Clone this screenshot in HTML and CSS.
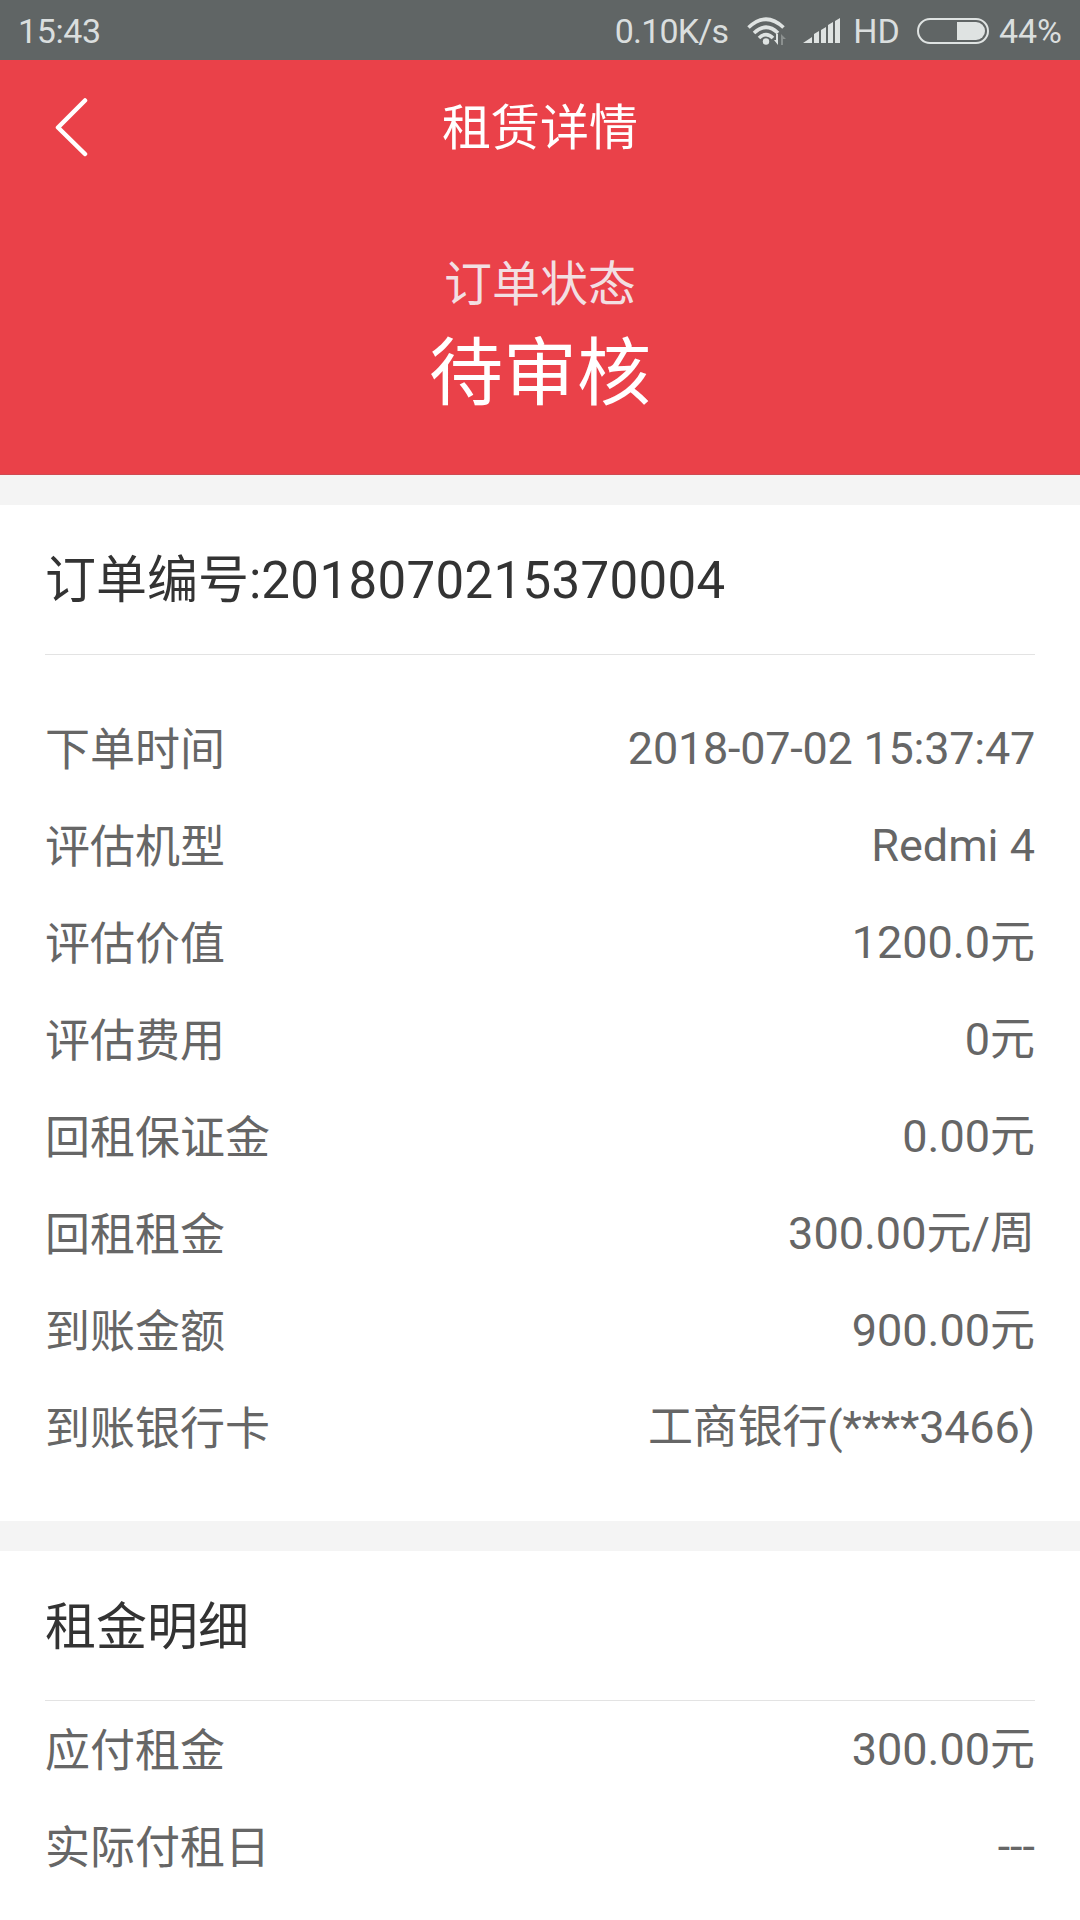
FILE: index.html
```html
<!DOCTYPE html>
<html lang="zh-CN">
<head>
    <meta charset="UTF-8">
    <meta name="viewport" content="width=device-width, initial-scale=1.0">
    <title>租赁详情</title>
    <link rel="stylesheet" href="styles.css">
</head>
<body>
    <div class="status-bar">
        <span class="time">15:43</span>
        <span class="speed">0.10K/s</span>
        <svg class="wifi" width="40" height="28" viewBox="0 0 40 28" fill="none" stroke="#dfe3e2" stroke-width="3.6">
            <path d="M1.5 10.5Q19 -6 36.5 10.5M7 16Q19 4.5 31 16M12 21Q19 14 26 21"/>
            <circle cx="19" cy="24.5" r="3.2" fill="#dfe3e2" stroke="none"/>
            <path d="M27 23h2v-6h2v11z" fill="#dfe3e2" stroke="none"/>
            <path d="M34 17l5 5h-3v6h-2z" fill="#8b908f" stroke="none"/>
        </svg>
        <svg class="signal" width="38" height="26" viewBox="0 0 38 26" fill="#dfe3e2">
            <path d="M0 25L9 19V25zM11 16L16 13V25H11zM18 12L23 9V25H18zM25 7L30 4V25H25zM32 3L37 0V25H32z"/>
        </svg>
        <span class="hd">HD</span>
        <span class="battery"><span class="level"></span></span>
        <span class="percent">44%</span>
    </div>

    <div class="header">
        <div class="nav">
            <svg class="back" width="34" height="60" viewBox="0 0 34 60" fill="none" stroke="#fff" stroke-width="4.5" stroke-linecap="round" stroke-linejoin="round">
                <path d="M31 3.500L4 30.500L31 57"/>
            </svg>
            <div class="title">租赁详情</div>
        </div>
        <div class="state-label">订单状态</div>
        <div class="state">待审核</div>
    </div>

    <div class="card order">
        <div class="card-title">订单编号:<span class="number">2018070215370004</span></div>
        <div class="list">
            <div class="row"><span class="label">下单时间</span><span class="date">2018-07-02 15:37:47</span></div>
            <div class="row"><span class="label">评估机型</span><span>Redmi 4</span></div>
            <div class="row"><span class="label">评估价值</span><span>1200.0元</span></div>
            <div class="row"><span class="label">评估费用</span><span>0元</span></div>
            <div class="row"><span class="label">回租保证金</span><span>0.00元</span></div>
            <div class="row"><span class="label">回租租金</span><span>300.00元/周</span></div>
            <div class="row"><span class="label">到账金额</span><span>900.00元</span></div>
            <div class="row"><span class="label">到账银行卡</span><span class="bank">工商银行(****3466)</span></div>
        </div>
    </div>

    <div class="card rent">
        <div class="card-title">租金明细</div>
        <div class="list">
            <div class="row"><span class="label">应付租金</span><span>300.00元</span></div>
            <div class="row"><span class="label">实际付租日</span><span>---</span></div>
        </div>
    </div>
</body>
</html>
```
FILE: styles.css
```css
* {
    box-sizing: border-box;
}

body {
    margin: 0;
    height: 1920px;
    overflow: hidden;
    background-color: #f4f4f4;
    font-family: Roboto, "Noto Sans CJK SC", sans-serif;
}

.status-bar {
    display: flex;
    align-items: center;
    height: 60px;
    padding: 2px 18px 0;
    background-color: #606565;
    color: #dadede;
    font-size: 34px;
}

.time {
    margin-right: auto;
    letter-spacing: -0.4px;
}

.speed {
    letter-spacing: -0.8px;
}

.wifi {
    margin-left: 19px;
}

.signal {
    margin-left: 16px;
}

.hd {
    margin-left: 12px;
}

.battery {
    width: 72px;
    height: 26px;
    margin: 0 10px 0 17px;
    padding: 2px;
    border: 2px solid #dfe3e2;
    border-radius: 13px;
}

.level {
    display: block;
    width: 28px;
    height: 18px;
    margin-left: auto;
    background-color: #dfe3e2;
    border-radius: 0 9px 9px 0;
}

.header {
    height: 415px;
    background-color: #ea4149;
    border-bottom: 1px solid #cf4a52;
    color: #fff;
    text-align: center;
}

.nav {
    position: relative;
    height: 137px;
}

.back {
    position: absolute;
    left: 54px;
    top: 37px;
}

.title {
    font-size: 49px;
    line-height: 138px;
}

.state-label {
    padding-top: 52px;
    font-size: 48px;
    line-height: 72px;
    color: #f2dfe2;
}

.state {
    font-size: 74px;
    line-height: 105px;
}

.card {
    margin-top: 30px;
    padding: 0 45px;
    background-color: #fff;
}

.card-title {
    height: 150px;
    border-bottom: 1px solid #e3e3e3;
    color: #333;
    font-size: 51px;
    line-height: 151px;
}

.number {
    letter-spacing: 0.35px;
}

.row {
    display: flex;
    justify-content: space-between;
    height: 97px;
    color: #666;
    font-size: 45px;
    line-height: 97px;
}

.label {
    line-height: 101px;
}

.date {
    letter-spacing: -0.25px;
}

.bank {
    letter-spacing: -0.2px;
}

.order {
    height: 1016px;
}

.order .list {
    padding-top: 45px;
}

.rent {
    height: 369px;
}

.rent .card-title {
    line-height: 153px;
}
```
